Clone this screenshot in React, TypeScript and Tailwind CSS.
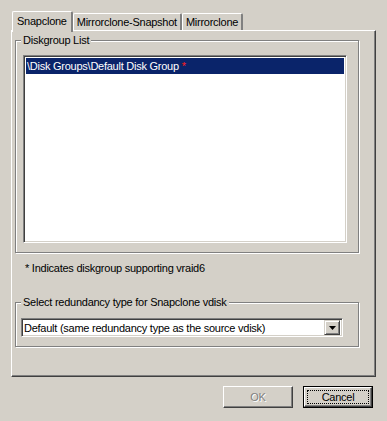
import React from 'react';

const font = { fontFamily: '"Liberation Sans", Arial, sans-serif' };

type GroupBoxProps = {
  label: string;
  className?: string;
  children: React.ReactNode;
};

const GroupBox = ({ label, className, children }: GroupBoxProps) => (
  <div className={`relative border border-[#808080] shadow-[inset_1px_1px_0_#ffffff,1px_1px_0_#ffffff] ${className ?? ''}`}>
    <span className="absolute left-[5px] top-[-8px] bg-[#d4d0c8] px-[2px] text-[11px] leading-[14px] text-black">
      {label}
    </span>
    {children}
  </div>
);

const App = () => {
  const tabs = ['Snapclone', 'Mirrorclone-Snapshot', 'Mirrorclone'];

  return (
    <div className="w-[387px] h-[421px] bg-[#d4d0c8] flex flex-col pt-[11px] overflow-hidden select-none tracking-[-0.25px]" style={font}>
      {/* tab strip */}
      <div className="flex items-end h-[19px] ml-[11px] relative z-10">
        {tabs.map((tab, i) =>
          i === 0 ? (
            <div
              key={tab}
              className="h-[21px] -mb-[2px] ml-[1px] px-[4px] pt-[3px] bg-[#d4d0c8] border-t border-l border-white border-r-2 border-r-[#808080] rounded-t-[2px] text-[11px] leading-[13px] text-black"
            >
              {tab}
            </div>
          ) : (
            <div
              key={tab}
              className="h-[17px] px-[3px] pt-[2px] bg-[#d4d0c8] border-t border-l border-white border-r-2 border-r-[#808080] rounded-t-[2px] text-[11px] leading-[13px] text-black"
            >
              {tab}
            </div>
          )
        )}
      </div>

      {/* tab panel */}
      <div className="ml-[11px] w-[365px] h-[347px] border border-white border-r-[#404040] border-b-[#404040] shadow-[inset_-1px_-1px_0_#808080] flex flex-col">
        <GroupBox label="Diskgroup List" className="mt-[9px] ml-[3px] w-[344px] h-[213px]">
          <div className="mt-[14px] ml-[7px] w-[324px] h-[188px] bg-white border border-[#808080] border-r-white border-b-white shadow-[inset_1px_1px_0_#404040,inset_-1px_-1px_0_#d4d0c8] p-[2px]">
            <div className="h-[16px] bg-[#0a246a] text-white text-[11px] leading-[16px] pl-[1px]">
              {'\\Disk Groups\\Default Disk Group '}
              <span className="text-[#ff2020]">*</span>
            </div>
          </div>
        </GroupBox>

        <div className="mt-[8px] ml-[13px] text-[11px] leading-[14px] text-black">* Indicates diskgroup supporting vraid6</div>

        <GroupBox label="Select redundancy type for Snapclone vdisk" className="mt-[27px] ml-[3px] w-[344px] h-[45px]">
          <div className="mt-[15px] ml-[5px] w-[322px] h-[19px] bg-white border border-[#808080] border-r-white border-b-white shadow-[inset_1px_1px_0_#404040,inset_-1px_-1px_0_#d4d0c8] flex items-center pl-[2px] pr-[2px]">
            <span className="flex-1 text-[11px] leading-[14px] text-black whitespace-nowrap overflow-hidden">
              Default (same redundancy type as the source vdisk)
            </span>
            <div className="w-[16px] h-[15px] bg-[#d4d0c8] border border-[#d4d0c8] border-r-[#404040] border-b-[#404040] shadow-[inset_1px_1px_0_#ffffff,inset_-1px_-1px_0_#808080] flex items-center justify-center">
              <svg width="7" height="4" viewBox="0 0 7 4">
                <path d="M0 0h7L3.5 4z" fill="#000" />
              </svg>
            </div>
          </div>
        </GroupBox>
      </div>

      {/* buttons */}
      <div className="mt-[9px] flex justify-end gap-[10px] mr-[14px]">
        <div className="w-[70px] h-[22px] border border-white border-r-[#404040] border-b-[#404040] shadow-[inset_-1px_-1px_0_#808080] flex items-center justify-center text-[11px] text-[#808080] [text-shadow:1px_1px_0_#ffffff]">
          OK
        </div>
        <div className="w-[70px] h-[22px] border border-black p-0">
          <div className="w-full h-full border border-white border-r-[#404040] border-b-[#404040] shadow-[inset_-1px_-1px_0_#808080] p-[2px]">
            <div className="w-full h-full border border-dotted border-black flex items-center justify-center text-[11px] leading-[12px] text-black">
              Cancel
            </div>
          </div>
        </div>
      </div>
    </div>
  );
};

export default App;
